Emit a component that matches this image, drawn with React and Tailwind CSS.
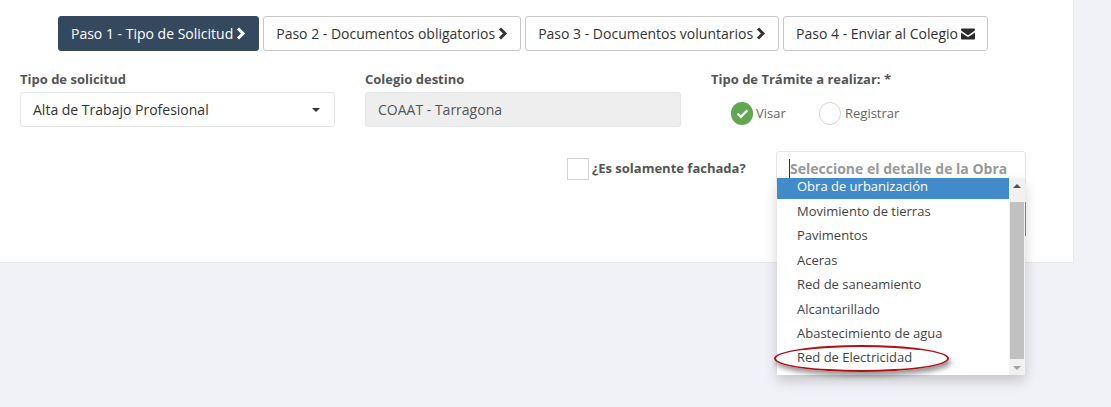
const steps = [
  { label: "Paso 1 - Tipo de Solicitud", active: true },
  { label: "Paso 2 - Documentos obligatorios" },
  { label: "Paso 3 - Documentos voluntarios" },
  { label: "Paso 4 - Enviar al Colegio", mail: true },
];

const options = [
  "Movimiento de tierras",
  "Pavimentos",
  "Aceras",
  "Red de saneamiento",
  "Alcantarillado",
  "Abastecimiento de agua",
  "Red de Electricidad",
];

function StepButton({ step }) {
  return (
    <button
      className={`flex h-[35px] items-center gap-[3px] rounded-[3px] border px-3 text-[14px] ${
        step.active
          ? "border-[#34495e] bg-[#34495e] text-white"
          : "border-[#c8c8c8] bg-white text-[#333]"
      }`}
    >
      {step.label}
      {step.mail ? (
        <svg width="14" height="12" viewBox="0 0 14 12" className="text-[#2b2b2b]">
          <path fill="currentColor" d="M1.2 0.5h11.6c.7 0 1.2.5 1.2 1.2 0 .5-.3 1-.7 1.3L7.6 6.900c-.4.2-.8.2-1.2 0L.7 3C.3 2.700 0 2.200 0 1.700 0 1 .5.5 1.2.5zM0 4.400l6 4c.6.4 1.400.4 2 0l6-4v6c0 .7-.5 1.100-1.200 1.100H1.200C.5 11.500 0 11.100 0 10.400z" />
        </svg>
      ) : (
        <svg width="10" height="13" viewBox="0 0 10 13">
          <path d="M2 1.500l5 5-5 5" fill="none" stroke="currentColor" strokeWidth="3" />
        </svg>
      )}
    </button>
  );
}

export default function App() {
  return (
    <div className="h-[407px] overflow-hidden bg-[#f1f2f7] font-['Open_Sans',sans-serif] text-[#333]">
      <div className="h-[263px] w-[1074px] border-r border-b border-[#e7e7e7] bg-white pt-4">
        <div className="ml-[58px] flex gap-1">
          {steps.map((s) => (
            <StepButton key={s.label} step={s} />
          ))}
        </div>

        <div className="mt-[19px] ml-5 flex">
          <div className="w-[345px]">
            <div className="text-[13px] leading-[18px] font-bold text-[#555]">Tipo de solicitud</div>
            <div className="mt-[4px] flex h-[35px] w-[315px] items-center justify-between rounded-[3px] border border-[#e5e6e7] bg-white pr-[14px] pl-3 text-[14px]">
              Alta de Trabajo Profesional
              <span className="h-0 w-0 border-x-[4px] border-t-[4px] border-x-transparent border-t-[#333]" />
            </div>
          </div>
          <div className="w-[346px]">
            <div className="text-[13px] leading-[18px] font-bold text-[#555]">Colegio destino</div>
            <div className="mt-[4px] flex h-[35px] w-[316px] items-center rounded-[3px] border border-[#e5e6e7] bg-[#eee] pl-3 text-[14px] text-[#555]">
              COAAT - Tarragona
            </div>
          </div>
          <div>
            <div className="text-[13px] leading-[18px] font-bold text-[#555]">Tipo de Trámite a realizar: *</div>
            <div className="mt-[14px] ml-5 flex items-center text-[13px] text-[#666]">
              <span className="flex h-[23px] w-[22px] items-center justify-center rounded-full bg-[#5fa84f]">
                <svg width="13" height="11" viewBox="0 0 12 10">
                  <path d="M1.500 5l3 3 6-6" fill="none" stroke="white" strokeWidth="2.200" />
                </svg>
              </span>
              <span className="ml-[3px] w-[63px]">Visar</span>
              <span className="h-[23px] w-[22px] rounded-full border border-[#d5d5d0] bg-white" />
              <span className="ml-[4px]">Registrar</span>
            </div>
          </div>
        </div>

        <div className="mt-[24px] flex">
          <div className="mt-[7px] ml-[567px] flex h-[22px] w-[209px] items-center">
            <span className="h-[22px] w-[22px] border border-[#d5d5d0] bg-white" />
            <span className="ml-[3px] text-[13px] font-bold text-[#555]">¿Es solamente fachada?</span>
          </div>
          <div className="relative w-[250px]">
            <div className="flex h-[35px] w-[250px] items-start rounded-[3px] border border-[#e5e6e7] bg-white pt-[5px] pl-3 text-[14px] leading-[24px] font-bold text-[#999]">
              <span className="mt-[2px] h-[19px] w-px bg-[#333]" />
              Seleccione el detalle de la Obra
            </div>
            <div className="absolute top-[51px] left-[249px] h-[34px] w-px bg-[#5fa84f]" />
            <div className="absolute top-[27px] left-px flex h-[197px] w-[248px] overflow-hidden bg-white shadow-[0_6px_12px_rgba(0,0,0,0.18)]">
              <div className="min-w-0 flex-1 text-[13px] text-[#444]">
                <div className="h-[21px] bg-[#428bca] pl-[20px] leading-[17px] text-white">
                  Obra de urbanización
                </div>
                {options.map((o) => (
                  <div key={o} className="h-[24.400px] pl-[20px] leading-[24.400px]">
                    {o}
                  </div>
                ))}
              </div>
              <div className="flex w-[16px] flex-col items-center bg-[#f1f1f1]">
                <span className="mt-[6px] h-0 w-0 border-x-[4px] border-b-[4px] border-x-transparent border-b-[#505050]" />
                <span className="mt-[14px] h-[157px] w-[14px] bg-[#c1c1c1]" />
                <span className="mt-[7px] h-0 w-0 border-x-[4px] border-t-[4px] border-x-transparent border-t-[#a3a3a3]" />
              </div>
            </div>
            {/* red circle someone drew on the capture */}
            <div className="absolute top-[194px] left-[-2px] h-[27px] w-[175px] rounded-[50%] border-[2.500px] border-[#b01116] shadow-[2px_4px_5px_rgba(0,0,0,0.4)]" />
          </div>
        </div>
      </div>
    </div>
  );
}
